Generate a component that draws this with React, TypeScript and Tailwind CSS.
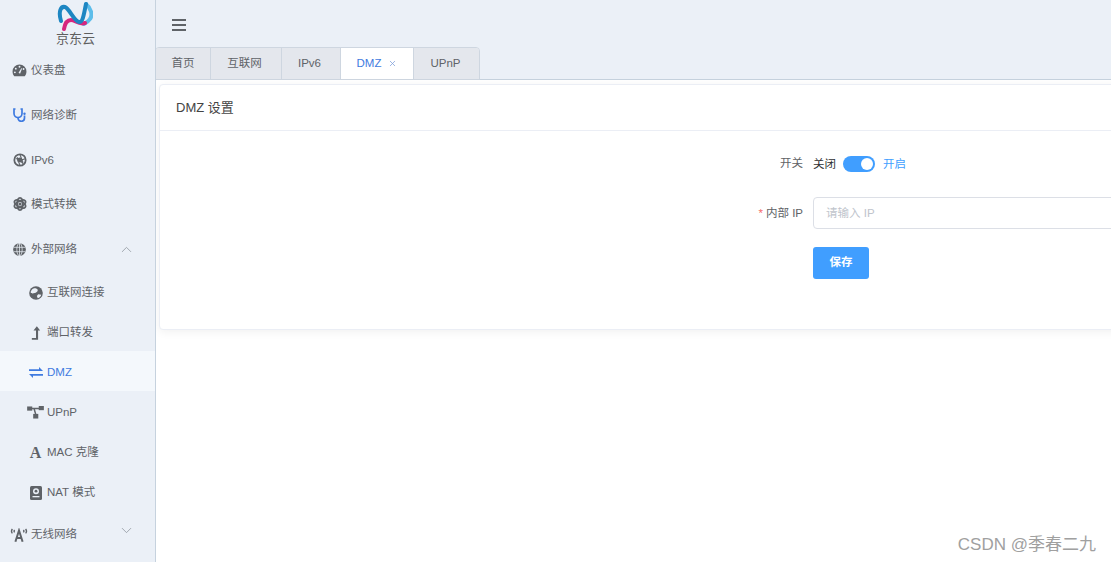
import React from 'react';
import { ChevronUp, ChevronDown, X } from 'lucide-react';

const font = "font-['Liberation_Sans','Noto_Sans_CJK_SC',sans-serif]";

const Gauge = () => (
  <svg viewBox="0 0 16 14" className="w-[15px] h-[13px]" fill="#5f6368">
    <path d="M8 0.5a7.5 7.5 0 0 0-7.5 7.5c0 2 .7 3.800 1.900 5.200h11.200c1.200-1.400 1.900-3.200 1.900-5.200A7.500 7.500 0 0 0 8 .5z" />
    <circle cx="8" cy="3" r="1" fill="#ebf0f7" />
    <circle cx="4" cy="5" r="1" fill="#ebf0f7" />
    <circle cx="12.4" cy="5.4" r="1" fill="#ebf0f7" />
    <circle cx="3" cy="9" r="1" fill="#ebf0f7" />
    <path d="M7 9.500L10 4.500l.8.4L8.600 10.400z" fill="#ebf0f7" />
  </svg>
);

const Scope = () => (
  <svg viewBox="0 0 14 14" className="w-[14px] h-[14px]" fill="none" stroke="#3f7be0" strokeWidth="1.700">
    <path d="M2.500 1H1v4.500a4 4 0 0 0 8 0V1H7.500" />
    <path d="M5 9.500V10a3 3 0 0 0 6.500 0V7.500" />
    <circle cx="11.500" cy="5.800" r="1.200" fill="#3f7be0" stroke="none" />
  </svg>
);

const Aperture = () => (
  <svg viewBox="0 0 16 16" className="w-[14px] h-[14px]" fill="none" stroke="#5f6368">
    <circle cx="8" cy="8" r="6.500" strokeWidth="2" />
    <path d="M8 2l3.500 9M14 6.500l-9 3M11.800 12.500L4.500 5M3 6.500h6M8 14l-3-7" strokeWidth="1.200" />
    <circle cx="8" cy="8" r="2.800" fill="#5f6368" stroke="none" />
  </svg>
);

const Atom = () => (
  <svg viewBox="0 0 16 16" className="w-[14px] h-[14px]" fill="none" stroke="#5f6368" strokeWidth="2">
    <ellipse cx="8" cy="8" rx="3.200" ry="7" />
    <ellipse cx="8" cy="8" rx="3.200" ry="7" transform="rotate(60 8 8)" />
    <ellipse cx="8" cy="8" rx="3.200" ry="7" transform="rotate(120 8 8)" />
    <circle cx="8" cy="8" r="1.800" fill="#5f6368" stroke="none" />
  </svg>
);

const GlobeSolid = () => (
  <svg viewBox="0 0 16 16" className="w-[13px] h-[13px]">
    <circle cx="8" cy="8" r="7.800" fill="#5f6368" />
    <g fill="none" stroke="#ebf0f7" strokeWidth="0.9">
      <ellipse cx="8" cy="8" rx="3.300" ry="7.800" />
      <path d="M8 0v16M0.800 5.300h14.400M0.800 10.700h14.400" />
    </g>
  </svg>
);

const EarthSolid = () => (
  <svg viewBox="0 0 16 16" className="w-[14px] h-[14px]">
    <circle cx="8" cy="8" r="7.800" fill="#5f6368" />
    <path d="M6 2.500c2 0 4 .5 4 2.300S8 7.500 6.500 8 2.500 9 2 7.500 4 2.500 6 2.500zM10.500 9.500l3.500.5c-.5 2-2 3.500-4 4l-1-2.500z" fill="#ebf0f7" />
  </svg>
);

const UpTurn = () => (
  <svg viewBox="0 0 12 16" className="w-[10px] h-[14px]" fill="#5f6368">
    <path d="M7 0l4 5H8.500v11H1v-2h5V5H3z" />
  </svg>
);

const Swap = () => (
  <svg viewBox="0 0 14 11" className="w-[14px] h-[11px]" fill="#3f7be0">
    <path d="M0 2.200h10V0l4 3.900H0zM0 7.100h14v1.700H4V11z" />
  </svg>
);

const Nodes = () => (
  <svg viewBox="0 0 18 14" className="w-[17px] h-[13px]" fill="#5f6368">
    <rect x="0" y="0.500" width="5.500" height="4.500" />
    <rect x="12.500" y="0" width="5.500" height="4.500" />
    <rect x="6.500" y="8.500" width="5.500" height="5" />
    <path d="M4 2h9v1.500H8.500L10 9H8.400L6.800 3.500H4z" />
  </svg>
);

const Passport = () => (
  <svg viewBox="0 0 12 14" className="w-[12px] h-[14px]" fill="#5f6368">
    <rect x="0" y="0" width="12" height="14" rx="1.500" />
    <circle cx="6" cy="5.200" r="3" fill="#ebf0f7" />
    <circle cx="6" cy="5.200" r="1.400" fill="#5f6368" />
    <rect x="2.500" y="10" width="7" height="1.300" fill="#ebf0f7" />
  </svg>
);

const Antenna = () => (
  <svg viewBox="0 0 18 14" className="w-[18px] h-[14px]" fill="none" stroke="#5f6368" strokeWidth="1.400">
    <path d="M2.400 1Q.6 3.200 2.400 5.400M4.600 2Q3.600 3.200 4.600 4.400M15.600 1q1.800 2.200 0 4.400M13.400 2q1 1.200 0 2.400" />
    <path d="M5.400 13.700L9 2.500l3.600 11.200M6.800 10h4.400" strokeWidth="2" />
  </svg>
);

const Logo = () => (
  <svg viewBox="0 0 36 30" className="w-[36px] h-[30px]" fill="none" strokeWidth="4" strokeLinecap="round">
    <path d="M29 3C34 7 36 14 33 18c-2 3-4 4-6 5" stroke="#5dbdea" />
    <path d="M7 28C8 22 10 19 14 19c4 0 8 5 14 3" stroke="#d6267e" />
    <path d="M4 20C1 10 4 5 8 6c4 1 9 14 14 15 4 1 5-9 7-18" stroke="#1d86c2" />
  </svg>
);

const topItems: { label: string; icon: React.ReactNode }[] = [
  { label: '仪表盘', icon: <Gauge /> },
  { label: '网络诊断', icon: <Scope /> },
  { label: 'IPv6', icon: <Aperture /> },
  { label: '模式转换', icon: <Atom /> },
];

const subItems: { label: string; icon: React.ReactNode; active?: boolean }[] = [
  { label: '互联网连接', icon: <EarthSolid /> },
  { label: '端口转发', icon: <UpTurn /> },
  { label: 'DMZ', icon: <Swap />, active: true },
  { label: 'UPnP', icon: <Nodes /> },
  { label: 'MAC 克隆', icon: <span className="text-[16px] leading-none font-bold text-[#5f6368] font-['Liberation_Serif',serif]">A</span> },
  { label: 'NAT 模式', icon: <Passport /> },
];

const tabs = [
  { label: '首页', w: 'w-[55px]', pr: '' },
  { label: '互联网', w: 'w-[71px]', pr: 'pr-[3px]' },
  { label: 'IPv6', w: 'w-[59px]', pr: 'pr-[3px]' },
  { label: 'DMZ', w: 'w-[73px]', pr: '', active: true },
  { label: 'UPnP', w: 'w-[65px]', pr: 'pr-[2px]' },
];

export default function App() {
  return (
    <div className={`${font} w-[1111px] h-[562px] flex overflow-hidden bg-white relative`}>
      {/* sidebar */}
      <aside className="w-[156px] shrink-0 h-full bg-[#ebf0f7] border-r border-[#c6d2de] flex flex-col overflow-hidden">
        <div className="h-[47.500px] shrink-0 flex flex-col items-center">
          <div className="h-[31px] pt-[1px] pr-[5px]"><Logo /></div>
          <span className="text-[13px] leading-[15px] text-[#5f5f5f] pr-[4px]">京东云</span>
        </div>
        {topItems.map((it) => (
          <div key={it.label} className="h-[44.700px] shrink-0 flex items-center pl-[12px] pt-[1px]">
            <span className="w-[15px] flex justify-center">{it.icon}</span>
            <span className="ml-[4px] text-[11.500px] text-[#5f6368] pt-[1px]">{it.label}</span>
          </div>
        ))}
        <div className="h-[44.700px] shrink-0 flex items-center pl-[12px] pr-[20px] pt-[1px]">
          <span className="w-[15px] flex justify-center"><GlobeSolid /></span>
          <span className="ml-[4px] text-[11.500px] text-[#5f6368] pt-[1px]">外部网络</span>
          <ChevronUp size={17} color="#8d949c" strokeWidth={1.100} className="ml-auto" />
        </div>
        {subItems.map((it) => (
          <div
            key={it.label}
            className={`h-[40px] shrink-0 flex items-center pl-[27px] pt-[4px] ${it.active ? 'bg-[#f4f8fc]' : ''}`}
          >
            <span className="w-[17px] flex justify-center">{it.icon}</span>
            <span className={`ml-[3px] text-[11.500px] ${it.active ? 'text-[#3f7be0]' : 'text-[#5f6368]'}`}>{it.label}</span>
          </div>
        ))}
        <div className="h-[44px] shrink-0 flex items-center pl-[10px] pr-[20px] pt-[4px]">
          <Antenna />
          <span className="ml-[3px] text-[11.500px] text-[#5f6368]">无线网络</span>
          <ChevronDown size={17} color="#8d949c" strokeWidth={1.100} className="ml-auto -mt-[8px]" />
        </div>
      </aside>

      {/* main */}
      <main className="flex-1 min-w-0 flex flex-col overflow-hidden">
        <header className="h-[47px] shrink-0 bg-[#ebf0f7] flex flex-col justify-center gap-[3px] pl-[16px] pt-[3px]">
          <span className="w-[14px] h-[2px] bg-[#5f6368]" />
          <span className="w-[14px] h-[2px] bg-[#5f6368]" />
          <span className="w-[14px] h-[2px] bg-[#5f6368]" />
        </header>
        <div className="h-[33px] shrink-0 bg-[#ebf0f7] border-b border-[#c6d2de] flex">
          <div className="flex h-[33px] ml-[-1px] border border-[#ced6e0] rounded-t-[4px] overflow-hidden">
            {tabs.map((t, i) => (
              <div
                key={t.label}
                className={`${t.w} ${t.pr} h-full flex items-center justify-center text-[11.500px] ${i < tabs.length - 1 ? 'border-r border-[#ced6e0]' : ''} ${t.active ? 'bg-white text-[#3f7be0]' : 'bg-[#e4e7ed] text-[#5f6368]'}`}
              >
                {t.label}
                {t.active && <X size={9} color="#7f9fd8" strokeWidth={2} className="ml-[7px]" />}
              </div>
            ))}
          </div>
        </div>

        <div className="flex-1 bg-white pt-[4px] pl-[3px]">
          <section className="w-[1300px] h-[246px] bg-white border border-[#ebeef5] rounded-[4px] shadow-[0_2px_10px_0_rgba(0,0,0,0.06)]">
            <div className="h-[46px] border-b border-[#ebeef5] flex items-center pl-[16px] text-[13px] text-[#444]">DMZ 设置</div>
            <div className="pl-[543px] pt-[21px]">
              <div className="flex items-center h-[24px] text-[11.500px]">
                <span className="w-[100px] text-right text-[#606266]">开关</span>
                <span className="ml-[10px] text-[#303133] pt-[1px]">关闭</span>
                <span className="ml-[7px] w-[32px] h-[16px] rounded-full bg-[#409eff] flex items-center justify-end pr-[2px]">
                  <span className="w-[12px] h-[12px] rounded-full bg-white" />
                </span>
                <span className="ml-[8px] text-[#409eff] pt-[1px]">开启</span>
              </div>
              <div className="flex items-center h-[32px] mt-[21px] text-[11.500px]">
                <span className="w-[100px] text-right text-[#606266] pt-[1px]">
                  <span className="text-[#f56c6c] mr-[3px]">*</span>内部 IP
                </span>
                <div className="ml-[10px] w-[500px] h-[32px] border border-[#dcdfe6] rounded-[4px] flex items-center pl-[12px] pt-[1px] text-[#c0c4cc]">请输入 IP</div>
              </div>
              <div className="ml-[110px] mt-[18px] w-[56px] h-[32px] rounded-[3px] bg-[#409eff] text-white text-[11.500px] font-bold flex items-center justify-center">保存</div>
            </div>
          </section>
        </div>
      </main>

      <span className="absolute right-[15px] bottom-[7px] text-[17px] leading-[20px] text-[#a0a0a0]">CSDN @季春二九</span>
    </div>
  );
}
